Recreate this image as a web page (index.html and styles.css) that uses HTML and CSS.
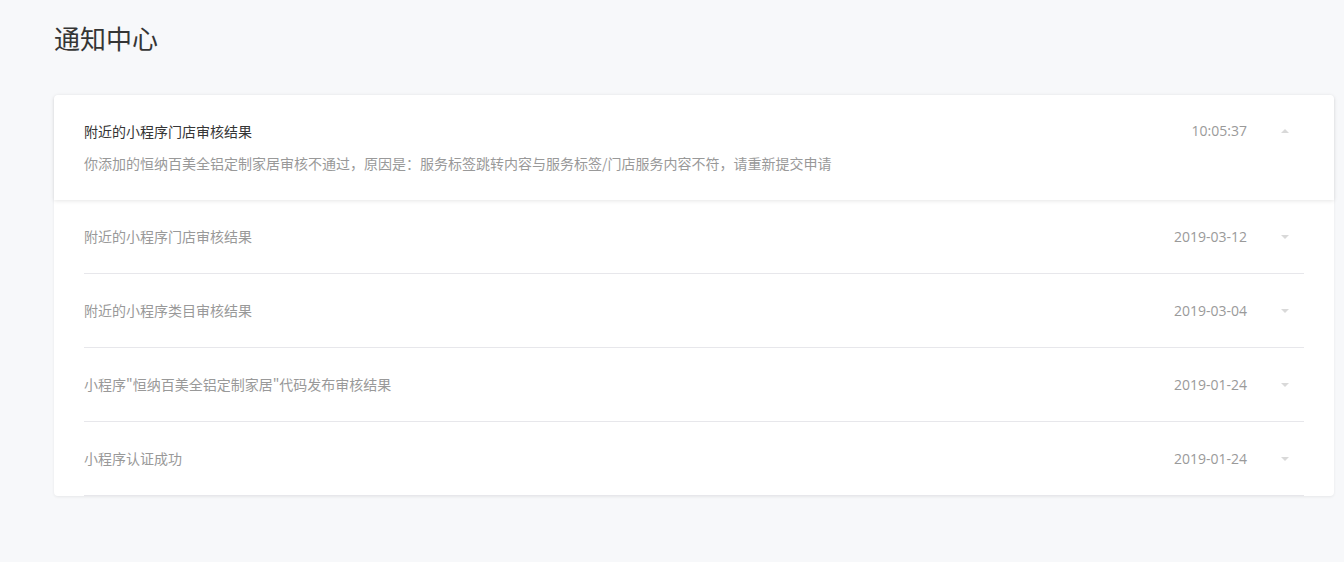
FILE: index.html
```html
<!doctype html>
<html lang="zh-CN">
<head>
    <meta charset="UTF-8">
    <meta name="viewport" content="width=device-width, initial-scale=1.0">
    <title>通知中心</title>
    <link rel="stylesheet" href="styles.css">
</head>
<body>

<div class="page">
    <h2 class="page_title">通知中心</h2>

    <div class="notice_list">
        <!-- opened -->
        <div class="notice notice_open">
            <div class="notice_head">
                <div class="notice_title">附近的小程序门店审核结果</div>
                <div class="notice_time">10:05:37</div>
                <div class="notice_arrow"><i class="arrow_up"></i></div>
            </div>
            <div class="notice_text">你添加的恒纳百美全铝定制家居审核不通过，原因是：服务标签跳转内容与服务标签/门店服务内容不符，请重新提交申请</div>
        </div>
        <!-- closed -->
        <div class="notice">
            <div class="notice_head">
                <div class="notice_title">附近的小程序门店审核结果</div>
                <div class="notice_time">2019-03-12</div>
                <div class="notice_arrow"><i class="arrow_down"></i></div>
            </div>
        </div>
        <div class="notice">
            <div class="notice_head">
                <div class="notice_title">附近的小程序类目审核结果</div>
                <div class="notice_time">2019-03-04</div>
                <div class="notice_arrow"><i class="arrow_down"></i></div>
            </div>
        </div>
        <div class="notice">
            <div class="notice_head">
                <div class="notice_title">小程序"恒纳百美全铝定制家居"代码发布审核结果</div>
                <div class="notice_time">2019-01-24</div>
                <div class="notice_arrow"><i class="arrow_down"></i></div>
            </div>
        </div>
        <div class="notice">
            <div class="notice_head">
                <div class="notice_title">小程序认证成功</div>
                <div class="notice_time">2019-01-24</div>
                <div class="notice_arrow"><i class="arrow_down"></i></div>
            </div>
        </div>
    </div>
</div>

</body>
</html>
```

FILE: styles.css
```css
body {
    margin: 0;
    background-color: #f7f8fa;
    font-family: "Noto Sans CJK SC", "Noto Sans", sans-serif;
    font-size: 14px;
    color: #999;
}

.page {
    padding: 20px 10px 40px 54px;
}

.page_title {
    margin: 0 0 39px;
    font-size: 26px;
    line-height: 36px;
    font-weight: normal;
    color: #353535;
}

.notice_list {
    background-color: #fff;
    border-radius: 4px;
    box-shadow: 0 1px 3px rgba(0, 0, 0, 0.07);
}

.notice {
    margin: 0 30px;
    padding: 27px 0;
    border-bottom: 1px solid #e7e7eb;
    line-height: 19px;
}

.notice_open {
    margin: 0;
    padding: 26px 30px 27px;
    border-bottom: 0;
    border-radius: 4px 4px 0 0;
    box-shadow: 0 1px 4px rgba(0, 0, 0, 0.1);
    line-height: 20px;
}

.notice_head {
    display: flex;
    align-items: center;
}

.notice_title {
    flex: 1;
}

.notice_open .notice_title {
    color: #353535;
}

.notice_time {
    font-family: "Open Sans", "Noto Sans", sans-serif;
    color: #9a9a9a;
}

.notice_arrow {
    width: 38px;
    margin-left: 19px;
    display: flex;
    justify-content: center;
}

.arrow_up,
.arrow_down {
    display: block;
    width: 0;
    height: 0;
    border-left: 4px solid transparent;
    border-right: 4px solid transparent;
}

.arrow_up {
    border-bottom: 4px solid #d9d9d9;
}

.arrow_down {
    border-top: 4px solid #d9d9d9;
}

.notice_text {
    margin-top: 12px;
}
```
